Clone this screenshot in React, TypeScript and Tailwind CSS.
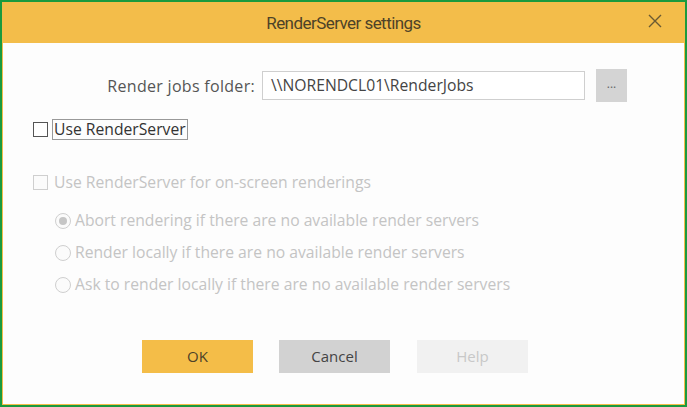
import React from "react";

const font = { fontFamily: '"Open Sans", "Noto Sans", sans-serif' };

function Radio({ checked, label }: { checked?: boolean; label: string }) {
  return (
    <div className="flex h-[32px] items-center gap-[4px]">
      <span className="flex h-[16px] w-[16px] items-center justify-center rounded-full border border-[#cfcfcf] bg-[#fbfbfb]">
        {checked && <span className="h-[8px] w-[8px] rounded-full bg-[#c6c6c6]" />}
      </span>
      <span className="text-[15.7px] text-[#c4c4c4]">{label}</span>
    </div>
  );
}

export default function App() {
  return (
    <div
      className="flex h-[407px] w-[687px] flex-col border-2 border-[#1a9a3e] bg-[#fdfdfd]"
      style={font}
    >
      <div className="flex h-full flex-col border border-[#f3bd4a]">
        {/* Title bar */}
        <div className="relative flex h-[40px] shrink-0 items-center justify-center bg-[#f3bd4a] pt-[2px]">
          <span className="font-['Roboto',sans-serif] text-[17px] tracking-[-0.55px] text-[#4d4228]">
            RenderServer settings
          </span>
          <svg
            className="absolute right-[22px] top-[11px]"
            width="14"
            height="14"
            viewBox="0 0 14 14"
          >
            <path d="M1 1L13 13M13 1L1 13" stroke="#6a5a33" strokeWidth="1.4" />
          </svg>
        </div>

        {/* Body */}
        <div className="flex flex-1 flex-col px-[30px] pt-[26px]">
          <div className="flex items-center">
            <span className="w-[228px] pr-[6px] text-right text-[16px] tracking-[0.3px] text-[#555]">
              Render jobs folder:
            </span>
            <div className="ml-[1px] flex h-[29px] w-[323px] items-center border border-[#cfcfcf] bg-white px-[8px] text-[15.7px] text-[#444]">
              \\NORENDCL01\RenderJobs
            </div>
            <div className="ml-[11px] flex h-[33px] w-[31px] items-center justify-center bg-[#d4d4d4] pb-[4px] text-[12px] text-[#666]">
              ...
            </div>
          </div>

          <div className="mt-[17px] flex items-center gap-[4px]">
            <span className="h-[15px] w-[15px] border border-[#555] bg-white" />
            <span className="border border-[#999] px-[1px] text-[15.7px] leading-[19px] text-[#333]">
              Use RenderServer
            </span>
          </div>

          <div className="mt-[31px] flex items-center gap-[6px]">
            <span className="h-[15px] w-[15px] border border-[#cfcfcf] bg-[#fbfbfb]" />
            <span className="text-[15.7px] text-[#c4c4c4]">
              Use RenderServer for on-screen renderings
            </span>
          </div>

          <div className="mt-[10px] flex flex-col pl-[22px]">
            <Radio checked label="Abort rendering if there are no available render servers" />
            <Radio label="Render locally if there are no available render servers" />
            <Radio label="Ask to render locally if there are no available render servers" />
          </div>

          <div className="mt-[39px] flex gap-[26px] pl-[109px]">
            <div className="flex h-[33px] w-[111px] items-center justify-center bg-[#f4bd48] text-[15px] text-[#4d4228]">
              OK
            </div>
            <div className="flex h-[33px] w-[111px] items-center justify-center bg-[#d2d2d2] text-[15px] text-[#444]">
              Cancel
            </div>
            <div className="ml-[1px] flex h-[33px] w-[111px] items-center justify-center bg-[#f1f1f1] text-[15px] text-[#c8c8c8]">
              Help
            </div>
          </div>
        </div>
      </div>
    </div>
  );
}
